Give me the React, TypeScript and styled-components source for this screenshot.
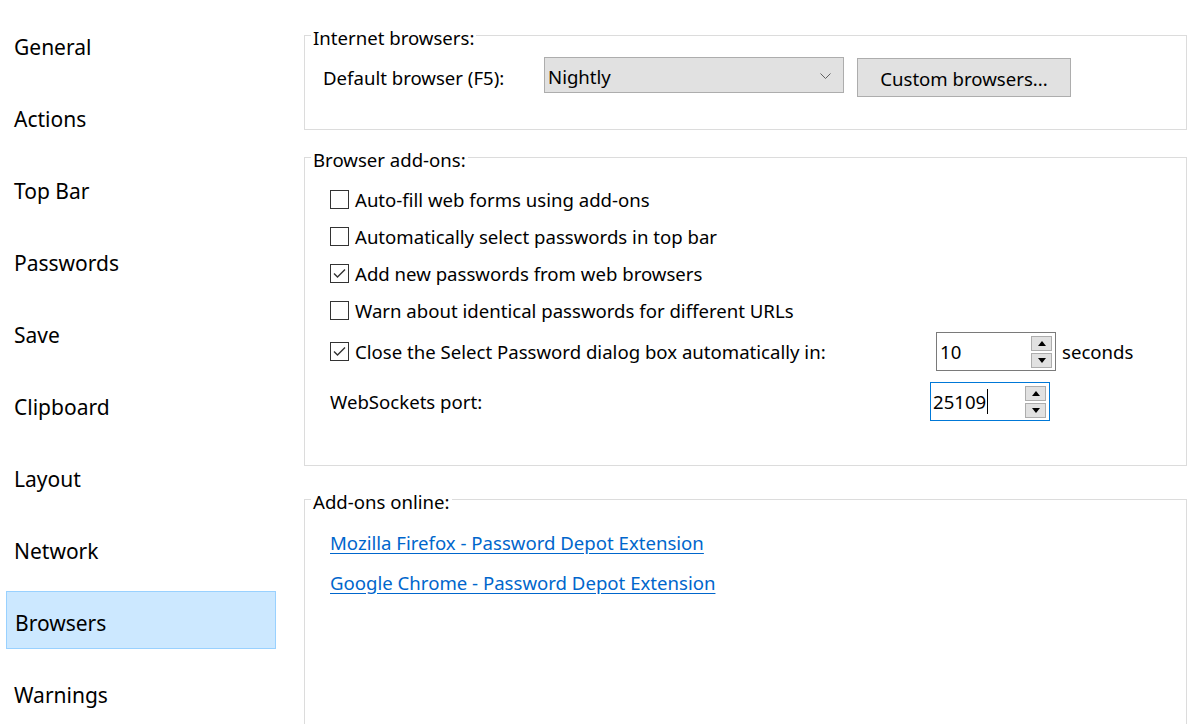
import React from "react";
import styled, { createGlobalStyle } from "styled-components";

const FS = "18.6px";

const Global = createGlobalStyle`
  html, body { margin: 0; padding: 0; background: #fff; }
  body { font-family: "Noto Sans", "Open Sans", sans-serif; color: #000; overflow: hidden; }
  #root { width: 1201px; height: 724px; overflow: hidden; }
`;

const Window = styled.div`
  display: flex;
  width: 1201px;
  height: 724px;
  overflow: hidden;
  background: #fff;
`;

const Sidebar = styled.nav`
  width: 304px;
  flex-shrink: 0;
  box-sizing: border-box;
  padding: 15px 0 0 6px;
  display: flex;
  flex-direction: column;
  gap: 14px;
`;

const NavItem = styled.div<{ $active?: boolean }>`
  width: 270px;
  height: 58px;
  flex-shrink: 0;
  box-sizing: border-box;
  display: flex;
  align-items: center;
  padding: 6px 0 0 ${(p) => (p.$active ? 8 : 7)}px;
  font-size: 21px;
  border: 1px solid ${(p) => (p.$active ? "#99d1ff" : "transparent")};
  background: ${(p) => (p.$active ? "#cce8ff" : "transparent")};
`;

const Main = styled.main`
  width: 883px;
  flex-shrink: 0;
  padding-top: 35px;
  display: flex;
  flex-direction: column;
`;

const Group = styled.section<{ $h: number; $mt?: number; $pt: number; $pl: number }>`
  position: relative;
  flex-shrink: 0;
  box-sizing: border-box;
  border: 1px solid #dcdcdc;
  height: ${(p) => p.$h}px;
  margin-top: ${(p) => p.$mt ?? 0}px;
  padding: ${(p) => p.$pt}px 0 0 ${(p) => p.$pl}px;
  display: flex;
  flex-direction: column;
`;

const Legend = styled.span`
  position: absolute;
  left: 6px;
  top: -10px;
  background: #fff;
  padding: 0 2px;
  font-size: ${FS};
  line-height: 24px;
  white-space: nowrap;
`;

const Row = styled.div`
  display: flex;
  align-items: flex-start;
`;

const FieldLabel = styled.div<{ $w: number }>`
  width: ${(p) => p.$w}px;
  flex-shrink: 0;
  font-size: ${FS};
  line-height: 36px;
  padding-top: 3px;
  white-space: nowrap;
`;

const Select = styled.div`
  width: 300px;
  height: 36px;
  box-sizing: border-box;
  border: 1px solid #adadad;
  background: #e1e1e1;
  display: flex;
  align-items: center;
  justify-content: space-between;
  padding: 2px 12px 0 3px;
  font-size: ${FS};
`;

const Button = styled.div`
  margin: 1px 0 0 13px;
  width: 214px;
  height: 39px;
  box-sizing: border-box;
  border: 1px solid #adadad;
  background: #e1e1e1;
  display: flex;
  align-items: center;
  justify-content: center;
  padding-top: 2px;
  font-size: ${FS};
`;

const CheckRow = styled.div`
  height: 37px;
  display: flex;
  align-items: center;
  gap: 6px;
  font-size: ${FS};
  white-space: nowrap;
`;

const Box = styled.span`
  width: 19px;
  height: 19px;
  flex-shrink: 0;
  box-sizing: border-box;
  border: 1px solid #333;
  background: #fff;
  display: flex;
  align-items: center;
  justify-content: center;
`;

const SpinRow = styled.div<{ $mt: number }>`
  margin-top: ${(p) => p.$mt}px;
  height: 39px;
  display: flex;
  align-items: center;
  font-size: ${FS};
  white-space: nowrap;
`;

const SpinLabel = styled.div<{ $w: number }>`
  width: ${(p) => p.$w}px;
  flex-shrink: 0;
  display: flex;
  align-items: center;
  gap: 6px;
`;

const Spin = styled.div<{ $focus?: boolean }>`
  width: 120px;
  height: 39px;
  box-sizing: border-box;
  border: 1px solid ${(p) => (p.$focus ? "#0078d7" : "#7a7a7a")};
  display: flex;
  align-items: center;
  justify-content: space-between;
  padding: 0 3px 0 ${(p) => (p.$focus ? 2 : 3)}px;
  flex-shrink: 0;
`;

const SpinValue = styled.span`
  display: flex;
  align-items: center;
  font-size: ${FS};
`;

const Caret = styled.span`
  width: 1px;
  height: 25px;
  background: #000;
  margin-left: 1px;
`;

const SpinButtons = styled.div`
  display: flex;
  flex-direction: column;
  gap: 2px;
`;

const SpinBtn = styled.span`
  width: 21px;
  height: 15px;
  box-sizing: border-box;
  border: 1px solid #adadad;
  background: #e1e1e1;
  display: flex;
  align-items: center;
  justify-content: center;
`;

const Unit = styled.span`
  margin-left: 6px;
  font-size: ${FS};
`;

const Link = styled.a`
  display: block;
  height: 40px;
  line-height: 40px;
  font-size: ${FS};
  color: #0066cc;
  text-decoration: underline;
  text-underline-offset: 3px;
  white-space: nowrap;
  width: fit-content;
`;

const Chevron = () => (
  <svg width="11" height="7" viewBox="0 0 11 7">
    <polyline points="0.5,0.5 5.5,5.5 10.5,0.5" fill="none" stroke="#606060" strokeWidth="1" />
  </svg>
);

const Check = () => (
  <svg width="15" height="15" viewBox="0 0 15 15">
    <polyline points="2,7.5 5.5,11 13,3.5" fill="none" stroke="#333" strokeWidth="1.4" />
  </svg>
);

const Tri = ({ up }: { up?: boolean }) => (
  <svg width="8" height="5" viewBox="0 0 8 5">
    <polygon points={up ? "0,5 8,5 4,0" : "0,0 8,0 4,5"} fill="#000" />
  </svg>
);

const Spinner = ({ value, focus }: { value: string; focus?: boolean }) => (
  <Spin $focus={focus}>
    <SpinValue>
      {value}
      {focus && <Caret />}
    </SpinValue>
    <SpinButtons>
      <SpinBtn>
        <Tri up />
      </SpinBtn>
      <SpinBtn>
        <Tri />
      </SpinBtn>
    </SpinButtons>
  </Spin>
);

const Checkbox = ({ checked, label }: { checked?: boolean; label: string }) => (
  <CheckRow>
    <Box>{checked && <Check />}</Box>
    {label}
  </CheckRow>
);

const nav = [
  "General",
  "Actions",
  "Top Bar",
  "Passwords",
  "Save",
  "Clipboard",
  "Layout",
  "Network",
  "Browsers",
  "Warnings",
];

export default function App() {
  return (
    <>
      <Global />
      <Window>
        <Sidebar>
          {nav.map((n) => (
            <NavItem key={n} $active={n === "Browsers"}>
              {n}
            </NavItem>
          ))}
        </Sidebar>
        <Main>
          <Group $h={95} $pt={21} $pl={18}>
            <Legend>Internet browsers:</Legend>
            <Row>
              <FieldLabel $w={221}>Default browser (F5):</FieldLabel>
              <Select>
                <span>Nightly</span>
                <Chevron />
              </Select>
              <Button>Custom browsers...</Button>
            </Row>
          </Group>
          <Group $h={309} $mt={27} $pt={23} $pl={25}>
            <Legend>Browser add-ons:</Legend>
            <Checkbox label="Auto-fill web forms using add-ons" />
            <Checkbox label="Automatically select passwords in top bar" />
            <Checkbox checked label="Add new passwords from web browsers" />
            <Checkbox label="Warn about identical passwords for different URLs" />
            <SpinRow $mt={3}>
              <SpinLabel $w={606}>
                <Box>
                  <Check />
                </Box>
                Close the Select Password dialog box automatically in:
              </SpinLabel>
              <Spinner value="10" />
              <Unit>seconds</Unit>
            </SpinRow>
            <SpinRow $mt={11}>
              <SpinLabel $w={600}>WebSockets port:</SpinLabel>
              <Spinner value="25109" focus />
            </SpinRow>
          </Group>
          <Group $h={260} $mt={33} $pt={23} $pl={25}>
            <Legend>Add-ons online:</Legend>
            <Link href="#">Mozilla Firefox - Password Depot Extension</Link>
            <Link href="#">Google Chrome - Password Depot Extension</Link>
          </Group>
        </Main>
      </Window>
    </>
  );
}
